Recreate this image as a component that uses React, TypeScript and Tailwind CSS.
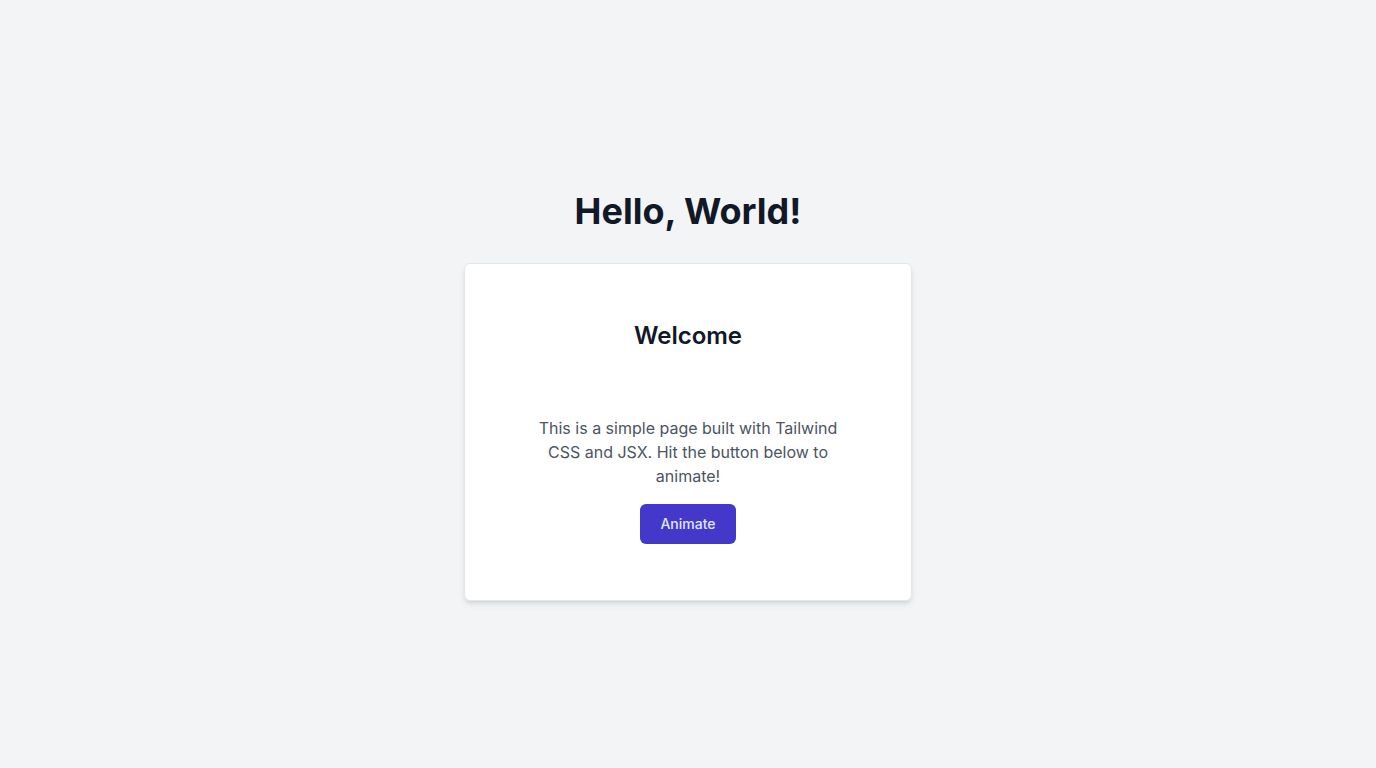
export default function App() {
  return (
    <div className="flex flex-col items-center justify-center min-h-screen pt-6 bg-[#f3f4f6] font-['Inter',sans-serif]">
      <h1 className="mb-8 text-4xl font-bold text-[#111827]">Hello, World!</h1>

      {/* Card */}
      <div className="flex flex-col items-center w-full max-w-md p-14 bg-white border border-[#e5e7eb] rounded-md shadow-md">
        <h2 className="mb-16 text-2xl font-semibold text-[#111827]">Welcome</h2>
        <p className="max-w-xs text-base leading-6 text-center text-[#4b5563]">
          This is a simple page built with Tailwind CSS and JSX. Hit the button below to animate!
        </p>
        <button
          type="button"
          className="mt-4 px-5 py-2.5 text-sm font-medium text-[#e0e7ff] bg-[#4338ca] rounded-md hover:bg-[#3730a3]"
        >
          Animate
        </button>
      </div>
    </div>
  );
}
